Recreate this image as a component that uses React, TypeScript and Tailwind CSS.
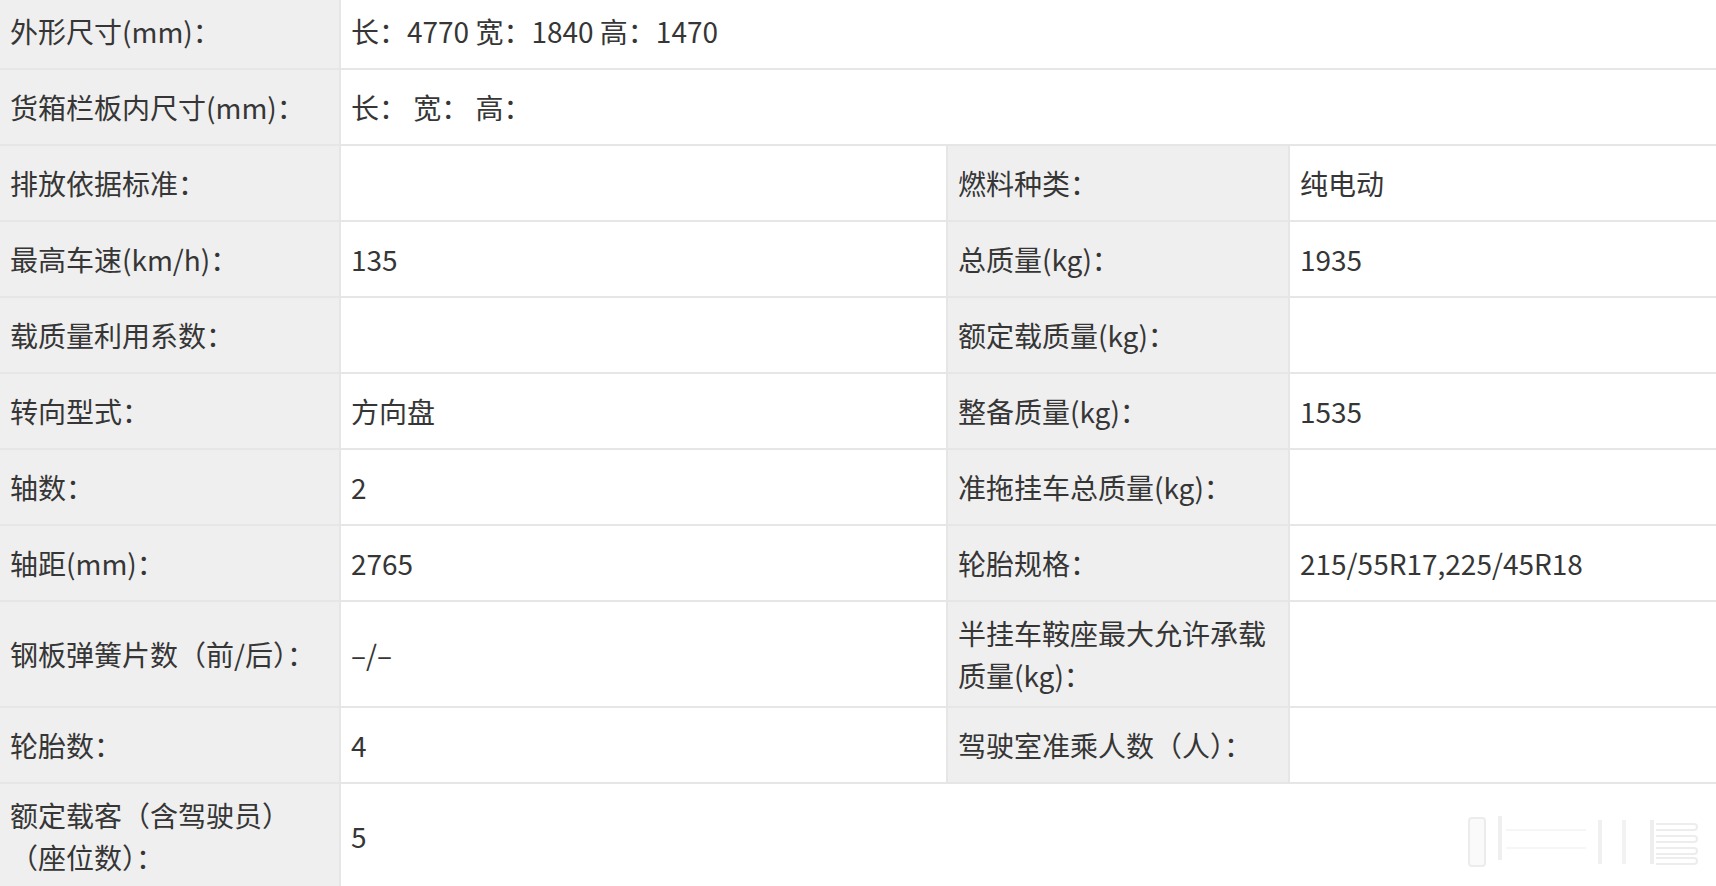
const font = {
  fontFamily: '"Noto Sans CJK SC", "Noto Sans", sans-serif',
};

type Cell = { text: string; label?: boolean; span?: boolean };

const rows: Cell[][] = [
  [{ text: "外形尺寸(mm)：", label: true }, { text: "长：4770 宽：1840 高：1470", span: true }],
  [{ text: "货箱栏板内尺寸(mm)：", label: true }, { text: "长： 宽： 高：", span: true }],
  [
    { text: "排放依据标准：", label: true },
    { text: "" },
    { text: "燃料种类：", label: true },
    { text: "纯电动" },
  ],
  [
    { text: "最高车速(km/h)：", label: true },
    { text: "135" },
    { text: "总质量(kg)：", label: true },
    { text: "1935" },
  ],
  [
    { text: "载质量利用系数：", label: true },
    { text: "" },
    { text: "额定载质量(kg)：", label: true },
    { text: "" },
  ],
  [
    { text: "转向型式：", label: true },
    { text: "方向盘" },
    { text: "整备质量(kg)：", label: true },
    { text: "1535" },
  ],
  [
    { text: "轴数：", label: true },
    { text: "2" },
    { text: "准拖挂车总质量(kg)：", label: true },
    { text: "" },
  ],
  [
    { text: "轴距(mm)：", label: true },
    { text: "2765" },
    { text: "轮胎规格：", label: true },
    { text: "215/55R17,225/45R18" },
  ],
  [
    { text: "钢板弹簧片数（前/后）：", label: true },
    { text: "–/–" },
    { text: "半挂车鞍座最大允许承载\n质量(kg)：", label: true },
    { text: "" },
  ],
  [
    { text: "轮胎数：", label: true },
    { text: "4" },
    { text: "驾驶室准乘人数（人）：", label: true },
    { text: "" },
  ],
  [{ text: "额定载客（含驾驶员）\n（座位数）：", label: true }, { text: "5", span: true }],
];

function Watermark() {
  return (
    <svg
      className="pointer-events-none absolute right-[14px] bottom-[16px]"
      width="236"
      height="56"
      viewBox="0 0 236 56"
      fill="none"
    >
      <rect x="3" y="4" width="16" height="48" rx="3" fill="#fafafa" stroke="#ececec" strokeWidth="2" />
      <rect x="32" y="2" width="4" height="44" fill="#efefef" />
      <line x1="40" y1="16" x2="120" y2="16" stroke="#f6f6f6" strokeWidth="2" />
      <line x1="40" y1="34" x2="120" y2="34" stroke="#f6f6f6" strokeWidth="2" />
      <rect x="132" y="6" width="4" height="44" fill="#f0f0f0" />
      <rect x="156" y="6" width="4" height="44" fill="#f2f2f2" />
      <rect x="184" y="6" width="4" height="44" fill="#eeeeee" />
      <path d="M190 10 H228 a3 3 0 0 1 0 6 H190" stroke="#ededed" strokeWidth="2" />
      <path d="M190 22 H228 a3 3 0 0 1 0 6 H190" stroke="#ededed" strokeWidth="2" />
      <path d="M190 34 H228 a3 3 0 0 1 0 6 H190" stroke="#ededed" strokeWidth="2" />
      <path d="M190 44 H228 a3 3 0 0 1 0 6 H190" stroke="#ededed" strokeWidth="2" />
    </svg>
  );
}

export default function App() {
  return (
    <div className="relative h-[886px] w-[1716px] overflow-hidden bg-white text-[28px] text-[#363636]" style={font}>
      <div className="-mt-[6px] grid grid-cols-[341px_607px_342px_1fr]">
        {rows.map((row, i) =>
          row.map((cell, j) => (
            <div
              key={`${i}-${j}`}
              className={
                (cell.label ? "bg-[#efefef] " : "bg-white ") +
                (cell.span ? "col-span-3 " : "") +
                (j === row.length - 1 ? "" : "border-r-2 ") +
                "flex min-h-[76px] items-center border-b-2 border-[#e6e6e6] py-[10px] pr-[6px] pl-[10px] leading-[42px]"
              }
            >
              <span className="whitespace-pre-line">{cell.text}</span>
            </div>
          ))
        )}
      </div>
      <Watermark />
    </div>
  );
}
